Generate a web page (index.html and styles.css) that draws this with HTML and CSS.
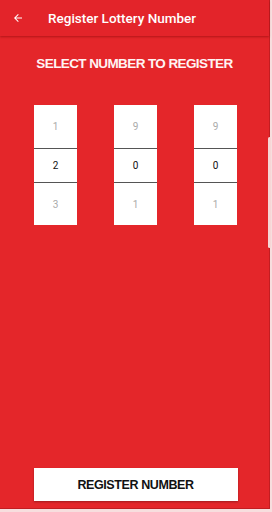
FILE: index.html
```html
<!DOCTYPE html>
<html lang="en">
<head>
  <meta charset="UTF-8">
  <title>Register Lottery Number</title>
  <link rel="stylesheet" href="styles.css">
</head>
<body>
  <div class="screen">
    <div class="toolbar">
      <svg class="back" width="12" height="12" viewBox="0 0 24 24">
        <path d="M20 11H7.83l5.59-5.59L12 4l-8 8 8 8 1.41-1.41L7.83 13H20v-2z" fill="#fff"/>
      </svg>
      <span class="title">Register Lottery Number</span>
    </div>

    <h2 class="heading">SELECT NUMBER TO REGISTER</h2>

    <div class="pickers">
      <div class="picker">
        <div class="cell top">1</div>
        <div class="cell mid">2</div>
        <div class="cell bottom">3</div>
      </div>
      <div class="picker">
        <div class="cell top">9</div>
        <div class="cell mid">0</div>
        <div class="cell bottom">1</div>
      </div>
      <div class="picker">
        <div class="cell top">9</div>
        <div class="cell mid">0</div>
        <div class="cell bottom">1</div>
      </div>
    </div>

    <div class="spacer"></div>

    <button class="register">REGISTER NUMBER</button>

    <div class="scrollbar"></div>
  </div>
</body>
</html>
```

FILE: styles.css
```css
html, body {
  margin: 0;
  padding: 0;
}
body {
  background-color: #f7dede;
  width: 272px;
  height: 512px;
  overflow: hidden;
  font-family: Roboto, 'Liberation Sans', sans-serif;
}
.screen {
  position: relative;
  width: 269px;
  height: 508px;
  background-color: #e4262a;
  border-right: 1px solid #c21d21;
  border-bottom: 1px solid #c21d21;
  display: flex;
  flex-direction: column;
}
.toolbar {
  height: 36px;
  background-color: #e3242a;
  box-shadow: 0 1px 2px rgba(120, 0, 0, 0.45);
  display: flex;
  align-items: center;
  color: white;
}
.back {
  margin-left: 12px;
  margin-right: 24px;
}
.title {
  font-size: 13.5px;
  font-weight: 500;
}
.heading {
  margin: 20px 0 0;
  text-align: center;
  color: #fff3f3;
  font-family: 'Liberation Sans', Arial, sans-serif;
  font-weight: bold;
  font-size: 13.5px;
  letter-spacing: -0.6px;
}
.pickers {
  display: flex;
  justify-content: center;
  gap: 37px;
  margin-top: 34px;
  padding-left: 2px;
}
.picker {
  width: 43px;
  background: white;
  display: flex;
  flex-direction: column;
}
.cell {
  display: flex;
  align-items: center;
  justify-content: center;
  font-size: 10px;
}
.top {
  height: 43px;
  color: #aaa;
  border-bottom: 1px solid #555;
}
.mid {
  height: 33px;
  color: #111;
  border-bottom: 1px solid #555;
}
.bottom {
  height: 42px;
  color: #aaa;
}
.spacer {
  flex: 1;
}
.register {
  align-self: center;
  margin: 0 0 7px 2px;
  width: 204px;
  height: 33px;
  background: white;
  border: none;
  box-shadow: 0 1px 2px rgba(0, 0, 0, 0.3);
  font-family: 'Liberation Sans', Arial, sans-serif;
  font-weight: bold;
  font-size: 12.5px;
  letter-spacing: -0.4px;
  color: #111;
}
.scrollbar {
  position: absolute;
  right: -2px;
  top: 137px;
  width: 3px;
  height: 111px;
  background: #f6d6d6;
  border-radius: 2px;
}
```
